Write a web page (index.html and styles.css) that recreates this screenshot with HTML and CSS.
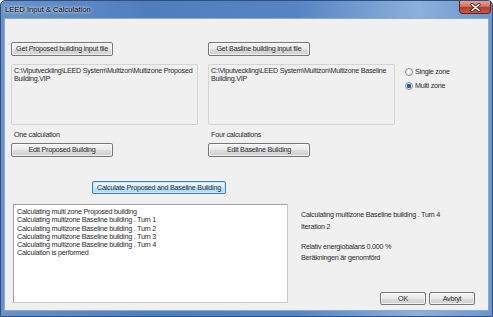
FILE: index.html
```html
<!doctype html>
<html lang="en">
<head>
  <meta charset="utf-8">
  <title>LEED Input &amp; Calculation</title>
  <link rel="stylesheet" href="styles.css">
</head>
<body>
  <div class="window">
    <div class="titlebar">
      <span class="title">LEED Input &amp; Calculation</span>
      <span class="close" aria-label="Close">
        <svg width="11" height="9" viewBox="0 0 11 9">
          <path d="M2 1.5 L9 7.5 M9 1.5 L2 7.5" stroke="#4a2a26" stroke-width="3.2" stroke-linecap="round"/>
          <path d="M2 1.5 L9 7.5 M9 1.5 L2 7.5" stroke="#fff" stroke-width="1.6" stroke-linecap="round"/>
        </svg>
      </span>
    </div>

    <div class="client">
      <div class="files">
        <div class="file-col">
          <button class="btn btn-file">Get Proposed building input file</button>
          <div class="path">C:\Viputveckling\LEED System\Multizon\Multizone Proposed<br>Building.VIP</div>
          <div class="note">One calculation</div>
          <button class="btn btn-file">Edit Proposed Building</button>
        </div>
        <div class="file-col">
          <button class="btn btn-file">Get Basline building input file</button>
          <div class="path">C:\Viputveckling\LEED System\Multizon\Multizone Baseline<br>Building.VIP</div>
          <div class="note">Four calculations</div>
          <button class="btn btn-file">Edit Baseline Building</button>
        </div>
        <div class="zones">
          <label class="radio"><span class="radio-dot"></span>Single zone</label>
          <label class="radio checked"><span class="radio-dot"></span>Multi zone</label>
        </div>
      </div>

      <div class="calc-row">
        <button class="btn btn-calc">Calculate Proposed and Baseline Building</button>
      </div>

      <div class="result">
        <div class="log">
          <div>Calculating multi zone Proposed building</div>
          <div>Calculating multizone Baseline building . Turn 1</div>
          <div>Calculating multizone Baseline building . Turn 2</div>
          <div>Calculating multizone Baseline building . Turn 3</div>
          <div>Calculating multizone Baseline building . Turn 4</div>
          <div>Calculation is performed</div>
        </div>
        <div class="status">
          <div class="status-text">
            <div>Calculating multizone Baseline building . Turn 4</div>
            <div class="iter">Iteration 2</div>
            <div>Relativ energiobalans 0.000 %</div>
            <div>Beräkningen är genomförd</div>
          </div>
          <div class="actions">
            <button class="btn btn-dlg">OK</button>
            <button class="btn btn-dlg">Avbryt</button>
          </div>
        </div>
      </div>
    </div>
  </div>
</body>
</html>
```

FILE: styles.css
```css
:root {
  --client-bg:  #f0f0f0;
  --text:       #2a2a2a;
  --font:       7.2px;
}
*, *::before, *::after { box-sizing: border-box; }
body {
  margin: 0;
  background: #fff;
  font-family: "Liberation Sans", Arial, sans-serif;
  font-size: var(--font);
  letter-spacing: -0.25px;
  color: var(--text);
  overflow: hidden;
}

/* ── window frame ─────────────────────────────────────── */
.window {
  width: 493px;
  height: 317px;
  display: flex;
  flex-direction: column;
  border: 1px solid #2f4f7c;
  border-radius: 5px 5px 0 0;
  background: linear-gradient(90deg, #6a92c9 0%, #4f7ebf 30%, #5684c3 60%, #8db0dc 85%, #6b95cd 100%);
}
.titlebar {
  height: 17px;
  display: flex;
  align-items: center;
  padding-left: 4px;
}
.title {
  font-size: 7.6px;
  letter-spacing: 0;
  color: #000;
  text-shadow: 0 0 4px rgba(255,255,255,.9), 0 0 2px rgba(255,255,255,.9);
}
.close {
  margin-left: auto;
  margin-right: 1px;
  align-self: flex-start;
  width: 32px;
  height: 13px;
  display: flex;
  align-items: center;
  justify-content: center;
  border: 1px solid #5a2622;
  border-top: none;
  border-radius: 0 0 4px 4px;
  background: linear-gradient(#e6a295 0%, #d1705f 45%, #b8382a 55%, #cf5a45 100%);
}

.client {
  flex: 1;
  margin: 0 3px 5px 3px;
  border: 1px solid #8ea9cf;
  background: var(--client-bg);
  padding: 23px 6px 7px 6px;
  display: flex;
  flex-direction: column;
}

/* ── buttons ──────────────────────────────────────────── */
.btn {
  font: inherit;
  letter-spacing: inherit;
  color: var(--text);
  padding: 0;
  white-space: nowrap;
  border: 1px solid #777;
  border-radius: 2px;
  background: linear-gradient(#f3f3f3 0%, #ebebeb 48%, #dddddd 52%, #cfcfcf 100%);
  box-shadow: inset 0 0 0 1px rgba(255,255,255,.7);
  line-height: 1;
}

/* ── file columns ─────────────────────────────────────── */
.files {
  display: flex;
  gap: 10px;
}
.file-col {
  width: 187px;
  display: flex;
  flex-direction: column;
}
.btn-file {
  width: 102px;
  height: 14px;
}
.path {
  margin-top: 8px;
  height: 61px;
  padding: 2px 2px;
  border: 1px solid #d4d4d4;
  border-radius: 2px;
  line-height: 8px;
  white-space: nowrap;
}
.note {
  height: 18px;
  display: flex;
  align-items: center;
  padding-left: 3px;
}
.zones {
  padding-top: 25px;
  display: flex;
  flex-direction: column;
  gap: 5px;
}
.radio {
  height: 9px;
  display: flex;
  align-items: center;
  gap: 2px;
}
.radio-dot {
  width: 8px;
  height: 8px;
  border-radius: 50%;
  border: 1px solid #8e8f8f;
  background: radial-gradient(circle at 40% 35%, #fff, #dcdcdc);
}
.radio.checked .radio-dot {
  background: radial-gradient(circle, #1f5fa6 0 2px, #e9eef5 2.5px);
}

/* ── calculate ────────────────────────────────────────── */
.calc-row {
  padding: 24px 0 0 81px;
}
.btn-calc {
  width: 134px;
  height: 13px;
  border-color: #3c7fb1;
  background: linear-gradient(#eaf6fd 0%, #d9f0fc 48%, #bee6fd 52%, #a7d9f5 100%);
  box-shadow: inset 0 0 0 1px #c8e8fa;
}

/* ── results ──────────────────────────────────────────── */
.result {
  flex: 1;
  margin-top: 10px;
  display: flex;
}
.log {
  width: 275px;
  margin-left: 2px;
  padding: 3px 3px;
  background: #fff;
  border: 1px solid #a0a0a0;
  border-right-color: #c8c8c8;
  border-bottom-color: #c8c8c8;
  line-height: 8.3px;
}
.status {
  flex: 1;
  display: flex;
  flex-direction: column;
  padding-left: 13px;
}
.status-text {
  padding-top: 6px;
  line-height: 10.5px;
}
.iter { margin: 1px 0 10px; }
.actions {
  margin-top: auto;
  margin-bottom: -2px;
  display: flex;
  gap: 3px;
  padding-left: 79px;
}
.btn-dlg {
  width: 46px;
  height: 13px;
}
```
